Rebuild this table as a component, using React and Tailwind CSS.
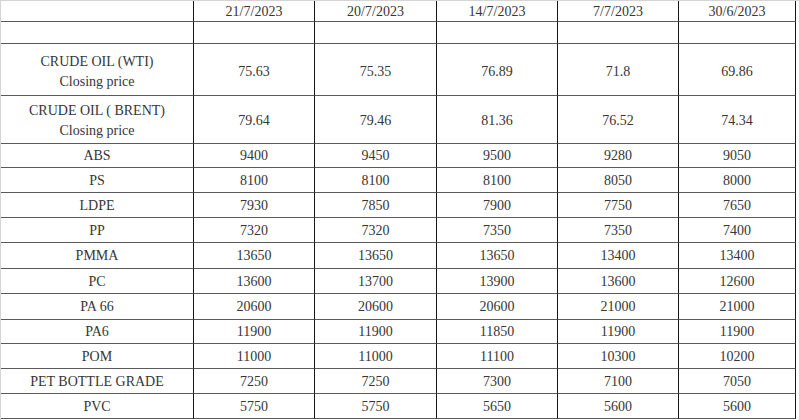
import React from "react";

const widths = ["w-[193px]", "w-[121px]", "w-[122px]", "w-[121px]", "w-[121px]", "w-[117px]"];

const rows = [
  { h: "h-[21px]", pad: "pt-[2px]", cells: ["", "21/7/2023", "20/7/2023", "14/7/2023", "7/7/2023", "30/6/2023"] },
  { h: "h-[22px]", pad: "", cells: ["", "", "", "", "", ""] },
  { h: "h-[52px]", pad: "pt-[5px]", cells: [["CRUDE OIL (WTI)", "Closing price"], "75.63", "75.35", "76.89", "71.8", "69.86"] },
  { h: "h-[48px]", pad: "pt-[3px]", cells: [["CRUDE OIL ( BRENT)", "Closing price"], "79.64", "79.46", "81.36", "76.52", "74.34"] },
  { h: "h-[24px]", pad: "pt-[1px]", cells: ["ABS", "9400", "9450", "9500", "9280", "9050"] },
  { h: "h-[25px]", pad: "pt-[1px]", cells: ["PS", "8100", "8100", "8100", "8050", "8000"] },
  { h: "h-[25px]", pad: "pt-[1px]", cells: ["LDPE", "7930", "7850", "7900", "7750", "7650"] },
  { h: "h-[25px]", pad: "pt-[1px]", cells: ["PP", "7320", "7320", "7350", "7350", "7400"] },
  { h: "h-[26px]", pad: "pt-[1px]", cells: ["PMMA", "13650", "13650", "13650", "13400", "13400"] },
  { h: "h-[25px]", pad: "pt-[1px]", cells: ["PC", "13600", "13700", "13900", "13600", "12600"] },
  { h: "h-[26px]", pad: "pt-[1px]", cells: ["PA 66", "20600", "20600", "20600", "21000", "21000"] },
  { h: "h-[24px]", pad: "pt-[1px]", cells: ["PA6", "11900", "11900", "11850", "11900", "11900"] },
  { h: "h-[25px]", pad: "pt-[1px]", cells: ["POM", "11000", "11000", "11100", "10300", "10200"] },
  { h: "h-[25px]", pad: "pt-[1px]", cells: ["PET BOTTLE GRADE", "7250", "7250", "7300", "7100", "7050"] },
  { h: "h-[25px]", pad: "pt-[1px]", cells: ["PVC", "5750", "5750", "5650", "5600", "5600"] },
];

export default function App() {
  return (
    <div
      className="w-[800px] h-[420px] bg-white border-l border-t border-r border-[#d4d4d4] overflow-hidden text-[14px] text-[#363636]"
      style={{ fontFamily: '"Liberation Serif", "Times New Roman", serif' }}
    >
      {rows.map((r, ri) => (
        <div key={ri} className={`flex ${r.h}`}>
          {r.cells.map((c, ci) => (
            <div
              key={ci}
              className={`${widths[ci]} ${r.pad} shrink-0 h-full box-border border-b border-b-[#5a5a5a] border-r border-r-[#161616] flex flex-col items-center justify-center text-center leading-[20px]`}
            >
              {Array.isArray(c) ? (
                c.map((line, li) => <span key={li}>{line}</span>)
              ) : (
                <span>{c}</span>
              )}
            </div>
          ))}
        </div>
      ))}
    </div>
  );
}
